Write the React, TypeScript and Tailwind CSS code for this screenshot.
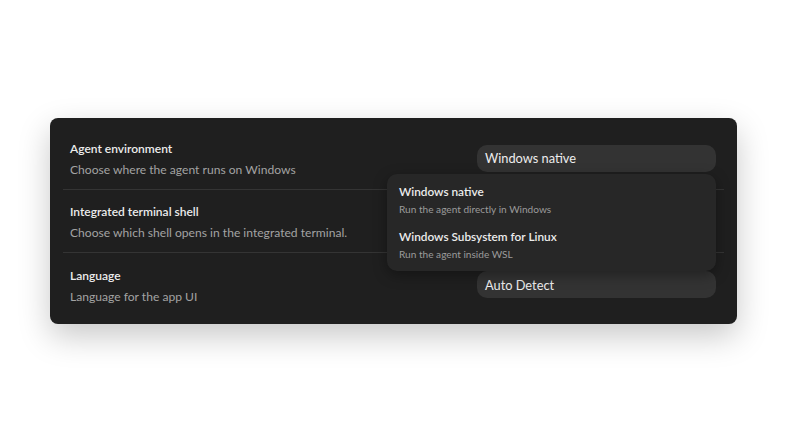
const font = { fontFamily: 'Lato, "Noto Sans", sans-serif' }

interface Setting {
  title: string
  description: string
  value?: string
}

const settings: Setting[] = [
  { title: "Agent environment", description: "Choose where the agent runs on Windows", value: "Windows native" },
  { title: "Integrated terminal shell", description: "Choose which shell opens in the integrated terminal." },
  { title: "Language", description: "Language for the app UI", value: "Auto Detect" },
]

const options = [
  { label: "Windows native", hint: "Run the agent directly in Windows" },
  { label: "Windows Subsystem for Linux", hint: "Run the agent inside WSL" },
]

const Menu = () => (
  <div className="absolute right-0 top-[calc(100%+2px)] z-10 w-[329px] rounded-[10px] bg-[#272727] px-1 pt-1 pb-[3px] shadow-[0_4px_14px_rgba(0,0,0,0.35)]">
    {options.map(o => (
      <div key={o.label} className="flex flex-col gap-[2px] rounded-md px-2 py-[6.5px]">
        <div className="text-[11.8px] leading-4 font-semibold text-[#ececec]">{o.label}</div>
        <div className="text-[10.1px] leading-[14px] text-[#9b9b9b]">{o.hint}</div>
      </div>
    ))}
  </div>
)

const Row = ({ setting, open, last }: { setting: Setting, open?: boolean, last?: boolean }) => (
  <div className={`flex h-[63px] items-center justify-between pl-[7px] pr-2 ${last ? "" : "border-b border-[#343434]"}`}>
    <div className="flex flex-col gap-[3px] pt-[3px]">
      <div className="text-[12px] leading-[18px] font-semibold text-[#ececec]">{setting.title}</div>
      <div className="text-[12.1px] leading-[18px] text-[#a3a3a3]">{setting.description}</div>
    </div>
    <div className="relative">
      {setting.value && (
        <div className="flex h-[27px] w-[239px] items-center rounded-[10px] bg-[#333333] px-2 pt-[2px] text-[12.8px] text-[#ededed]">
          {setting.value}
        </div>
      )}
      {open && <Menu />}
    </div>
  </div>
)

export default function App() {
  return (
    <div className="min-h-screen bg-white px-[50px] pt-[118px]" style={font}>
      <div className="w-[687px] rounded-lg bg-[#1f1f1f] px-[13px] pt-[9px] pb-2 shadow-[0_12px_32px_rgba(0,0,0,0.22)]">
        {settings.map((s, i) => (
          <Row key={s.title} setting={s} open={i === 0} last={i === settings.length - 1} />
        ))}
      </div>
    </div>
  )
}
